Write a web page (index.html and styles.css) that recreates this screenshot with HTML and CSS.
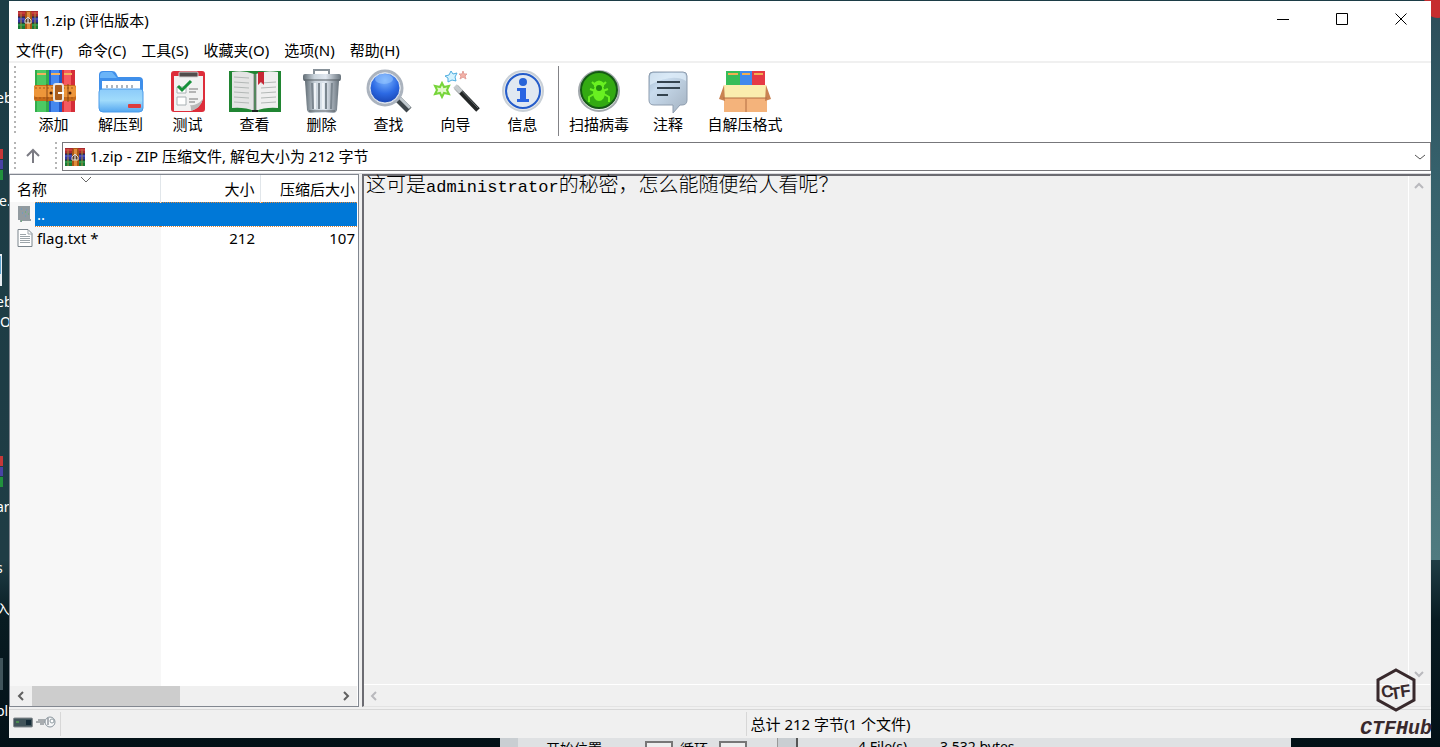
FILE: index.html
```
<!DOCTYPE html>
<html lang="zh-CN">
<head>
	<meta charset="utf-8">
	<title>1.zip (评估版本)</title>
	<link rel="stylesheet" href="styles.css">
</head>
<body>
	<svg class="sprites" aria-hidden="true">
		<symbol id="books" viewBox="0 0 42 44">
			<rect x="1" y="1" width="14" height="42" fill="#32ad4b"/>
			<rect x="3" y="1" width="9" height="42" fill="#4cc963"/>
			<rect x="15" y="1" width="13" height="42" fill="#2459c4"/>
			<rect x="17" y="1" width="8" height="42" fill="#4588ef"/>
			<rect x="28" y="1" width="13" height="42" fill="#d52d38"/>
			<rect x="30" y="1" width="7" height="42" fill="#f55a60"/>
			<path d="M3 5h9M17 5h9M30 5h8" stroke="#f2b25c" stroke-width="2"/>
			<rect x="0" y="16" width="42" height="16" rx="2" fill="#c86a18"/>
			<rect x="0" y="17" width="42" height="11" rx="2" fill="#ee963a"/>
			<path d="M1 19h40M1 29h40" stroke="#a2561a" stroke-dasharray="2 2"/>
			<path d="M13 15v18M34 15v18" stroke="#8c4814" stroke-width="1"/>
			<rect x="20" y="15" width="9" height="17" rx="2" fill="#a95c1c" stroke="#e9e6e1" stroke-width="2"/>
			<path d="M24 24h6" stroke="#fff" stroke-width="2"/>
			<circle cx="17" cy="24" r="1.5" fill="#4b2109"/>
			<circle cx="36" cy="24" r="1.5" fill="#4b2109"/>
		</symbol>
		<symbol id="books-small" viewBox="0 0 20 18">
			<rect width="20" height="6" fill="#a8292f"/>
			<rect y="6" width="20" height="6" fill="#30349c"/>
			<rect y="12" width="20" height="6" fill="#177a36"/>
			<path d="M0 6h20M0 12h20" stroke="#222b39"/>
			<path d="M3 1v17M17 1v17" stroke="#b49140" stroke-width="1"/>
			<path d="M0 2h7M13 2h7" stroke="#e9534b"/>
			<path d="M0 8h7M13 8h7" stroke="#5d62cf"/>
			<path d="M0 14h7M13 14h7" stroke="#3cae58"/>
			<path d="M8 0h5l1 4v14H7V4z" fill="#a85718"/>
			<path d="M9 1h3v17H9z" fill="#e08c3b"/>
			<path d="M7 12V9l3-3 3 3v3z" fill="#5b3d28" stroke="#ddd8cb"/>
			<path d="M10 7v5" stroke="#fff"/>
		</symbol>
		<symbol id="chev-left" viewBox="0 0 10 10"><path d="M7 1L3 5l4 4" fill="none" stroke="currentColor" stroke-width="2"/></symbol>
		<symbol id="chev-right" viewBox="0 0 10 10"><path d="M3 1l4 4-4 4" fill="none" stroke="currentColor" stroke-width="2"/></symbol>
		<symbol id="chev-up" viewBox="0 0 10 10"><path d="M1 7l4-4 4 4" fill="none" stroke="currentColor" stroke-width="2"/></symbol>
		<symbol id="chev-down" viewBox="0 0 10 10"><path d="M1 3l4 4 4-4" fill="none" stroke="currentColor" stroke-width="2"/></symbol>
		<linearGradient id="tin">
			<stop offset="0" stop-color="#626d75"/>
			<stop offset=".3" stop-color="#cad4dc"/>
			<stop offset=".6" stop-color="#e0e7f0"/>
			<stop offset="1" stop-color="#69747d"/>
		</linearGradient>
		<linearGradient id="folder" x1="0" y1="0" x2="0" y2="1">
			<stop offset="0" stop-color="#8ccbfa"/>
			<stop offset=".5" stop-color="#a0dbfb"/>
			<stop offset="1" stop-color="#55a7f0"/>
		</linearGradient>
		<radialGradient id="lens" cx=".5" cy=".25" r=".8">
			<stop offset="0" stop-color="#7bb5ff"/>
			<stop offset=".55" stop-color="#2c69e3"/>
			<stop offset="1" stop-color="#1741ad"/>
		</radialGradient>
		<linearGradient id="bubble" x1="0" y1="0" x2="1" y2="1">
			<stop offset="0" stop-color="#9fb8ce"/>
			<stop offset=".3" stop-color="#c9dcee"/>
			<stop offset="1" stop-color="#a3b1c0"/>
		</linearGradient>
	</svg>

	<div class="desktop">
		<!-- desktop shortcuts behind the window -->
		<div class="shortcuts" aria-hidden="true">
			<span class="name n1">eb</span>
			<svg class="shot s1" viewBox="0 0 4 32"><path fill="#c63838" d="M0 0h3v10H0z"/><path fill="#4942a4" d="M0 11h3v9H0z"/><path fill="#21913d" d="M0 21h3v10H0z"/></svg>
			<span class="name n2">e.</span>
			<svg class="shot s2" viewBox="0 0 4 32"><path fill="#e8edf2" d="M0 0h2v32H0z"/><path fill="#5da3cf" d="M0 2h1v18H0z"/></svg>
			<span class="name n3">eb</span>
			<span class="name n4">O</span>
			<svg class="shot s3" viewBox="0 0 4 32"><path fill="#c63838" d="M0 0h3v10H0z"/><path fill="#4942a4" d="M0 11h3v9H0z"/><path fill="#21913d" d="M0 21h3v10H0z"/></svg>
			<span class="name n5">ar</span>
			<span class="name n6">s</span>
			<span class="name n7">入</span>
			<svg class="shot s4" viewBox="0 0 4 32"><path fill="#40545b" d="M0 0h3v32H0z"/></svg>
			<span class="name n8">pl</span>
		</div>
		<div class="badge"></div>
		<div class="behind">
			<span class="b1">开始位置</span>
			<i class="field f1"></i>
			<span class="b2">循环</span>
			<i class="field f2"></i>
			<i class="edge"></i>
			<span class="b3">4 File(s)</span>
			<span class="b4">3,532 bytes</span>
		</div>

		<main class="window">
			<header class="titlebar">
				<svg class="app-icon"><use href="#books-small"/></svg>
				<h1>1.zip (评估版本)</h1>
				<div class="caption">
					<button aria-label="最小化"><svg viewBox="0 0 13 13"><path d="M0 6.500h12"/></svg></button>
					<button aria-label="最大化"><svg viewBox="0 0 13 13"><path d="M.5.5h11v11H.5z"/></svg></button>
					<button aria-label="关闭"><svg viewBox="0 0 13 13"><path d="M.5.5l11 11M11.500.5l-11 11"/></svg></button>
				</div>
			</header>

			<nav class="menu">
				<button>文件(F)</button>
				<button>命令(C)</button>
				<button>工具(S)</button>
				<button>收藏夹(O)</button>
				<button>选项(N)</button>
				<button>帮助(H)</button>
			</nav>

			<div class="toolbar">
				<i class="grip"></i>
				<button><svg viewBox="0 0 54 46"><use href="#books" x="7" y="1" width="42" height="44"/></svg>添加</button>
				<button>
					<svg viewBox="0 0 54 46">
						<path d="M5 40V7q0-4 4-4h9q3 0 4 2l2 4h21q4 0 4 4v27z" fill="#3f8fea"/>
						<path d="M6 8q0-4 4-4h8l5 6H6z" fill="#6ab4f8"/>
						<path d="M8 13h38v12H8z" fill="#fff"/>
						<path d="M13 20v-3M18 20v-3M23 20v-3M28 20v-3M33 20v-3M38 20v-3" stroke="#adb5be" stroke-width="2"/>
						<path d="M5 24q0-3 3-3h38q3 0 3 3v16q0 4-4 4H9q-4 0-4-4z" fill="url(#folder)" stroke="#4a9bea"/>
						<rect x="34" y="36" width="13" height="4" rx="1" fill="#dd3d3d"/>
					</svg>解压到
				</button>
				<button>
					<svg viewBox="0 0 54 46">
						<rect x="10" y="3" width="34" height="41" rx="3" fill="#dd2d3a"/>
						<path d="M13 8h29v23q-3 9-12 12H13z" fill="#f2f2f2"/>
						<path d="M30 43q0-5-1-6 7 1 13-6-2 9-12 12" fill="#b8b8b8"/>
						<rect x="18" y="4" width="19" height="5" rx="1" fill="#514b4b" stroke="#d1cdcd"/>
						<path d="M16 19h9v6h-9zM16 29h9v8h-9z" fill="#fff" stroke="#a8b0b3"/>
						<path d="M17 18l4 4 9-9" fill="none" stroke="#16903a" stroke-width="3"/>
						<path d="M28 21h9M28 24h7M28 31h9M28 34h6" stroke="#777"/>
					</svg>测试
				</button>
				<button>
					<svg viewBox="0 0 54 46">
						<path d="M1 3h52v41H31l-4-1-4 1H1z" fill="#208532"/>
						<path d="M4 4q12-2 22 2v37q-9-4-22-3z" fill="#e4e4e4"/>
						<path d="M50 4q-13-2-22 2v37q9-4 22-3z" fill="#efefef"/>
						<path d="M26 6v37M28 6v37" stroke="#888"/>
						<path d="M6 9l15 1M6 14l15 1M6 19l15 1M6 24l15 1M6 29l15 1M6 34l15 1M33 15l15-1M33 20l15-1M33 25l15-1M33 30l15-1M33 35l15-1" stroke="#b3b8b6"/>
						<path d="M30 4h6v13l-3-3-3 3z" fill="#c82735"/>
						<path d="M24 43h6" stroke="#202724" stroke-width="2"/>
					</svg>查看
				</button>
				<button>
					<svg viewBox="0 0 54 46">
						<path d="M19 6V2h15v4" fill="none" stroke="#879199" stroke-width="2"/>
						<path d="M10 13h34l-2 29q-1 3-4 3H16q-3 0-4-3z" fill="url(#tin)"/>
						<path d="M17 15l1 26M24 15v26M31 15v26M37 15l-1 26" stroke="#7b868f" stroke-width="2"/>
						<path d="M20 15v26M28 15v26" stroke="#eff3f7" stroke-width="2"/>
						<rect x="8" y="6" width="38" height="7" rx="2" fill="url(#tin)"/>
						<path d="M9 12h36M14 43h26" stroke="#51595f"/>
					</svg>删除
				</button>
				<button>
					<svg viewBox="0 0 54 46">
						<path d="M36 31l11 11" stroke="#3d454a" stroke-width="7"/>
						<path d="M37 29l11 11" stroke="#c0c8cd" stroke-width="3"/>
						<circle cx="23" cy="20" r="17" fill="#fff" stroke="#abb3be" stroke-width="3"/>
						<circle cx="23" cy="20" r="15" fill="url(#lens)" stroke="#dce5ef"/>
						<ellipse cx="22" cy="11" rx="9" ry="5" fill="#9ccaff" opacity=".5"/>
					</svg>查找
				</button>
				<button>
					<svg viewBox="0 0 54 46">
						<path d="M27 19L49 42" stroke="#232626" stroke-width="5"/>
						<path d="M28 18L49 40" stroke="#687074"/>
						<path d="M26 18l6 6" stroke="#c6cbcd" stroke-width="5"/>
						<path d="M13 15l2 4 5-1-2 4 2 4-5-1-2 4-2-4-5 1 2-4-2-4 5 1z" fill="#e2facb" stroke="#77d53a" stroke-width="2"/>
						<path d="M22 3l2 3 4-1-2 4 1 4-4-1-4 2v-4l-3-2 4-1z" fill="#d5f3ff" stroke="#4eaddf"/>
						<path d="M34 3l1 3h3l-2 2 1 3-3-2-3 2 1-3-2-2h3z" fill="#f3b1a7" stroke="#e3a09a"/>
					</svg>向导
				</button>
				<button>
					<svg viewBox="0 0 54 46">
						<circle cx="27" cy="23" r="20" fill="#e4e8ec" stroke="#c9d0d7" stroke-width="2"/>
						<circle cx="27" cy="23" r="17" fill="#e0e8f1" stroke="#245cca" stroke-width="2"/>
						<circle cx="27" cy="14" r="4" fill="#2864d8"/>
						<path d="M21 20h9v11h3v3H21v-3h3v-8h-3z" fill="#2864e2"/>
					</svg>信息
				</button>
				<i class="rule"></i>
				<button class="scan">
					<svg viewBox="0 0 54 46">
						<circle cx="27" cy="23" r="20" fill="#edf1ee" stroke="#a3a9ad" stroke-width="2"/>
						<circle cx="27" cy="22" r="18" fill="#33aa12" stroke="#155a15" stroke-width="2"/>
						<ellipse cx="27" cy="25" rx="6" ry="8" fill="#69f021"/>
						<path d="M22 15q5-5 10 0v4H22z" fill="#69f021"/>
						<path d="M20 14l4 4M34 14l-4 4M18 21l5 2M36 21l-5 2M22 26l-5 3v5M32 26l5 3v5" fill="none" stroke="#69f021" stroke-width="2"/>
						<circle cx="27" cy="20" r="3" fill="#228d0e"/>
					</svg>扫描病毒
				</button>
				<button class="note">
					<svg viewBox="0 0 54 46">
						<path d="M12 4h30q4 0 4 4v24q0 5-5 5h-2l-7 8v-8H13q-5 0-5-5V8q0-4 4-4z" fill="url(#bubble)" stroke="#8e9daf"/>
						<path d="M12 5h29q4 0 4 5v3Q32 5 9 17V9q0-4 3-4" fill="#e1effb" opacity=".7"/>
						<path d="M16 14h23M16 20h23M16 27h11" stroke="#34434e" stroke-width="2"/>
					</svg>注释
				</button>
				<button class="sfx">
					<svg viewBox="0 0 54 46">
						<path d="M8 3h14v18H8z" fill="#37bd59"/>
						<path d="M22 3h12v18H22z" fill="#4289ec"/>
						<path d="M34 3h13v18H34z" fill="#e53945"/>
						<path d="M10 6h10M24 6h8M36 6h9" stroke="#f3ae52" stroke-width="2"/>
						<path d="M6 28h43v16H6z" fill="#f4b37b"/>
						<path d="M6 17h42l3 13H4z" fill="#faedae"/>
						<path d="M6 17L1 31l6 2M48 17l5 14-6 2" fill="#c98352"/>
						<path d="M5 30h44M28 31v13" stroke="#b26d43"/>
					</svg>自解压格式
				</button>
			</div>

			<div class="addressbar">
				<i class="grip"></i>
				<button class="up" aria-label="上一级"><svg viewBox="0 0 16 16"><path d="M8 15V2M2 8l6-6 6 6"/></svg></button>
				<i class="grip"></i>
				<div class="address">
					<svg class="app-icon"><use href="#books-small"/></svg>
					<select aria-label="路径">
						<option>1.zip - ZIP 压缩文件, 解包大小为 212 字节</option>
					</select>
					<svg class="drop" viewBox="0 0 10 10"><path d="M0 3l5 4 5-4"/></svg>
				</div>
			</div>

			<div class="panes">
				<section class="files">
					<div class="list">
						<table>
							<colgroup><col class="c-icon"><col class="c-name"><col class="c-size"><col></colgroup>
							<thead>
								<tr>
									<th colspan="2" class="sorted">名称<svg viewBox="0 0 10 6"><path d="M0 0l5 5 5-5"/></svg></th>
									<th>大小</th>
									<th>压缩后大小</th>
								</tr>
							</thead>
							<tbody>
								<tr class="selected">
									<td><svg viewBox="0 0 16 18"><path d="M1 1h12v13h1v2H5v1H3v-2H1z" fill="#929ba0"/><path d="M4 4h1M5 8h1M9 5h1M8 11h1" stroke="#5c9cd0"/><path d="M8 7h1M11 9h1M4 16h1" stroke="#58ba67"/></svg></td>
									<td>..</td>
									<td></td>
									<td></td>
								</tr>
								<tr>
									<td><svg viewBox="0 0 16 18"><path d="M1 .5h10l4 4v13H1z" fill="#fff" stroke="#7b858c"/><path d="M11 1v4h4M3 5.500h6M3 7.500h10M3 9.500h10M3 11.500h10M3 13.500h10" fill="none" stroke="#9da5aa"/></svg></td>
									<td>flag.txt *</td>
									<td>212</td>
									<td>107</td>
								</tr>
							</tbody>
						</table>
					</div>
					<div class="hscroll">
						<svg><use href="#chev-left"/></svg>
						<div class="track"><i class="thumb"></i></div>
						<svg><use href="#chev-right"/></svg>
					</div>
				</section>
				<section class="comment">
					<p>这可是<span>administrator</span>的秘密，怎么能随便给人看呢？</p>
					<div class="vscroll">
						<svg><use href="#chev-up"/></svg>
						<svg><use href="#chev-down"/></svg>
					</div>
					<div class="hscroll">
						<svg><use href="#chev-left"/></svg>
					</div>
				</section>
			</div>

			<footer class="status">
				<div class="status-icons">
					<svg class="disk" viewBox="0 0 20 12"><rect x=".5" y="1" width="19" height="9" rx="1" fill="#42545a" stroke="#888d91"/><path d="M13 3h5v5h-5z" fill="#142a36"/><path d="M3 4h3v2H3z" fill="#4c8c50"/></svg>
					<svg class="key" viewBox="0 0 20 14"><path d="M0 7h11M2 5h7M4 9h4" stroke="#60696e"/><circle cx="14" cy="7" r="5" fill="#f6f7f8" stroke="#89949c"/><path d="M12 3v7" stroke="#626b74"/><circle cx="16" cy="6" r="2" fill="#fff" stroke="#929da3"/></svg>
				</div>
				<div class="status-cell"></div>
				<div class="status-cell total">总计 212 字节(1 个文件)</div>
			</footer>
		</main>

		<div class="brand">
			<svg viewBox="0 0 40 44">
				<path d="M20 2l18 10v20L20 42 2 32V12z" fill="none" stroke="#38292c" stroke-width="3"/>
				<g transform="rotate(-8 20 22)">
					<text x="5" y="28">C</text>
					<text x="14" y="31">T</text>
					<text x="24" y="30">F</text>
				</g>
			</svg>
			<span>CTFHub</span>
		</div>
	</div>
</body>
</html>
```

FILE: styles.css
```
* {
	box-sizing: border-box;
}

body {
	margin: 0;
	font-family: "Noto Sans", "Noto Sans CJK SC", sans-serif;
	font-size: 15px;
	line-height: 20px;
	color: #000;
}

button,
select {
	padding: 0;
	border: none;
	background: none;
	font: inherit;
	color: inherit;
}

svg {
	display: block;
}

.sprites {
	position: absolute;
	width: 0;
	height: 0;
}

.desktop {
	position: relative;
	height: 100vh;
	padding: 1px 9px 9px;
	overflow: hidden;
	background: linear-gradient(#1c3d46 0, #1f3d45 75%, #081b22 83%, #031117 100%);
}

/* right edge of the wallpaper is lighter */
.desktop::before {
	content: "";
	position: absolute;
	top: 0;
	right: 0;
	width: 9px;
	height: 75%;
	background: linear-gradient(#2c4d59, #35606b 30%, #507b80);
}

.shortcuts span,
.shortcuts svg {
	position: absolute;
}

.name {
	left: -4px;
	font-size: 14px;
	color: #fff;
}

.shot {
	left: 0;
	width: 4px;
	height: 32px;
}

.n1 { top: 88px; }
.s1 { top: 149px; }
.n2 { top: 191px; left: -1px; }
.s2 { top: 254px; }
.n3 { top: 292px; }
.n4 { top: 312px; left: 0; }
.s3 { top: 456px; }
.n5 { top: 497px; }
.n6 { top: 558px; }
.n7 { top: 599px; }
.s4 { top: 658px; }
.n8 { top: 701px; }

.badge {
	position: absolute;
	top: -10px;
	right: -12px;
	width: 28px;
	height: 28px;
	border-radius: 50%;
	background: #c62d2f;
}

.behind {
	position: absolute;
	left: 500px;
	bottom: 0;
	width: 791px;
	height: 9px;
	overflow: hidden;
	background: #dfe1e3;
	border-left: 18px solid #c9ced2;
	font-size: 14px;
}

.behind span,
.behind i {
	position: absolute;
	top: 3px;
	white-space: nowrap;
}

.behind .b1 { left: 28px; top: 1px; }
.behind .b2 { left: 162px; top: 1px; }
.behind .b3 { left: 340px; top: -1px; }
.behind .b4 { left: 422px; top: -1px; }
.behind .f1 { left: 127px; }
.behind .f2 { left: 201px; }

.field {
	width: 28px;
	height: 12px;
	border: 2px solid #777;
	background: #eee;
}

.behind .edge {
	top: 0;
	left: 259px;
	width: 21px;
	height: 9px;
	border-left: 1px solid #999;
	border-right: 2px solid #555;
	background: #c9ced2;
}

.window {
	position: relative;
	display: flex;
	flex-direction: column;
	height: 100%;
	background: #fff;
}

.titlebar {
	display: flex;
	align-items: center;
	height: 37px;
	padding-left: 9px;
}

.titlebar h1 {
	flex: 1;
	margin: 0 0 0 5px;
	font-size: 15px;
	font-weight: normal;
}

.app-icon {
	width: 20px;
	height: 18px;
}

.caption {
	display: flex;
}

.caption button {
	display: flex;
	justify-content: center;
	width: 59px;
}

.caption svg {
	width: 13px;
	height: 13px;
	fill: none;
	stroke: #000;
}

.menu {
	display: flex;
	gap: 15px;
	height: 25px;
	padding: 1px 7px 0;
	border-bottom: 2px solid #f0f0f0;
}

.toolbar {
	display: flex;
	height: 75px;
	padding: 3px 0 2px 5px;
}

.toolbar button {
	display: flex;
	flex-direction: column;
	align-items: center;
	width: 67px;
	white-space: nowrap;
}

.toolbar button.scan {
	width: 80px;
}

.toolbar button.note {
	width: 58px;
}

.toolbar button.sfx {
	width: 96px;
}

.toolbar button svg {
	flex: none;
	width: 54px;
	height: 46px;
	margin-top: 2px;
}

.grip {
	width: 2px;
	margin-right: 4px;
	background: repeating-linear-gradient(#b5b5b5 0 2px, #fff 2px 5px);
}

.rule {
	width: 1px;
	margin-left: 2px;
	background: #838387;
}

.addressbar {
	display: flex;
	height: 33px;
	padding: 4px 0 0 5px;
}

.up {
	width: 26px;
	margin-right: 9px;
}

.up svg {
	width: 16px;
	height: 16px;
	margin: 0 auto 2px;
	fill: none;
	stroke: #7b7b83;
	stroke-width: 2;
}

.address {
	display: flex;
	flex: 1;
	align-items: center;
	gap: 5px;
	margin-left: 1px;
	padding: 0 5px 0 2px;
	border: 1px solid #77777b;
}

.address select {
	flex: 1;
	height: 22px;
	padding-bottom: 2px;
	appearance: none;
}

.drop {
	width: 10px;
	height: 10px;
	fill: none;
	stroke: #555;
}

.panes {
	display: flex;
	flex: 1;
	gap: 3px;
	min-height: 0;
	margin-top: 2px;
	padding-bottom: 2px;
	border-top: 1px solid #dcdce0;
	background: #f0f0f0;
}

.files {
	display: flex;
	flex-direction: column;
	width: 350px;
	padding-right: 1px;
	border: 1px solid #828790;
	background: #fff;
}

.list {
	flex: 1;
	background: linear-gradient(90deg, #f7f7f7 151px, #fff 151px);
}

table {
	width: 100%;
	table-layout: fixed;
	border-collapse: collapse;
}

.c-icon {
	width: 25px;
}

.c-name {
	width: 125px;
}

.c-size {
	width: 100px;
}

th,
td {
	height: 24px;
	padding: 0 2px;
	text-align: right;
	font-weight: normal;
	white-space: nowrap;
}

th {
	height: 27px;
	padding: 1px 2px 0 5px;
	background: #fff;
	border-right: 1px solid #e1e6ea;
}

th:nth-child(2),
td:nth-child(3) {
	padding-right: 5px;
}

th:last-child {
	border-right: none;
}

th.sorted {
	position: relative;
	padding-left: 7px;
	text-align: left;
}

.sorted svg {
	position: absolute;
	top: 2px;
	left: 71px;
	width: 10px;
	height: 6px;
	fill: none;
	stroke: #666;
}

td:nth-child(2) {
	text-align: left;
}

td svg {
	width: 16px;
	height: 18px;
	margin-left: 5px;
}

.selected td:not(:first-child) {
	background: #0078d7;
	border-top: 1px dotted #e08737;
	border-bottom: 1px dotted #e08737;
	color: #fff;
}

.hscroll {
	display: flex;
	align-items: center;
	height: 20px;
	background: #f0f0f0;
	color: #606060;
}

.hscroll svg,
.vscroll svg {
	width: 10px;
	height: 10px;
	margin: 0 6px;
}

.track {
	flex: 1;
	height: 20px;
}

.thumb {
	display: block;
	width: 49%;
	height: 20px;
	background: #cdcdcd;
}

.comment {
	display: grid;
	flex: 1;
	grid-template-columns: 1fr 22px;
	grid-template-rows: 1fr 22px;
	border: 2px solid #6c6c72;
	border-right: 1px solid #e3e3e3;
	border-bottom: 1px solid #e3e3e3;
	background: #f0f0f0;
}

.comment p {
	margin: 0;
	padding: 1px 2px;
	font-family: "Liberation Mono", "Noto Sans CJK SC", monospace;
	font-size: 20px;
	font-weight: 300;
}

.comment p span {
	font-size: 17px;
	font-weight: 400;
}

.vscroll {
	display: flex;
	flex-direction: column;
	justify-content: space-between;
	padding: 5px 0;
	border-left: 1px solid #fff;
	color: #b9b9bd;
}

.vscroll svg {
	margin: 0 5px;
}

.comment .hscroll {
	grid-column: 1 / 3;
	height: 22px;
	border-top: 1px solid #fff;
	color: #b9b9bd;
}

.comment .hscroll svg {
	margin: 0 5px;
}

.status {
	display: flex;
	height: 29px;
	padding: 2px 0;
	border-top: 1px solid #d7d7d7;
	background: #f0f0f0;
}

.status-icons {
	display: flex;
	gap: 3px;
	width: 52px;
	padding: 3px 0 0 4px;
	border-right: 1px solid #d7d7d7;
}

.disk {
	width: 20px;
	height: 12px;
	margin-top: 2px;
}

.key {
	width: 20px;
	height: 14px;
}

.status-cell {
	flex: 1;
	padding: 2px 4px;
}

.total {
	border-left: 1px solid #d7d7d7;
}

/* watermark in the corner */
.brand {
	position: absolute;
	right: 8px;
	bottom: 8px;
	display: flex;
	flex-direction: column;
	align-items: center;
	color: #38292c;
	font-family: "Liberation Mono", monospace;
	font-size: 20px;
	font-style: italic;
	font-weight: bold;
}

.brand svg {
	width: 40px;
	height: 44px;
	margin-bottom: 7px;
}

.brand text {
	fill: #38292c;
	font-family: "Liberation Sans", sans-serif;
	font-size: 17px;
	font-style: normal;
}
```
